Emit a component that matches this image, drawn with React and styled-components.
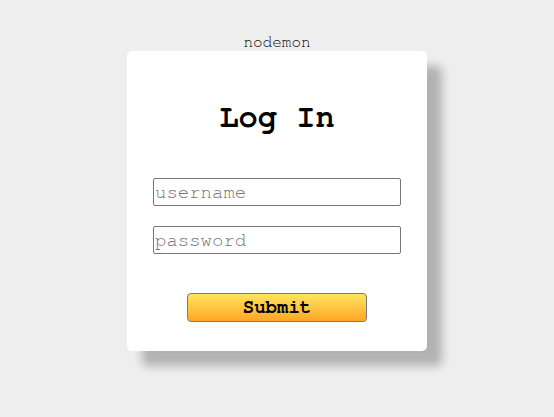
import React, { useState } from 'react';
import styled, { createGlobalStyle } from 'styled-components';

const mono = '"FreeMono", "TeX Gyre Cursor", "Liberation Mono", monospace';

const GlobalStyle = createGlobalStyle`
  html, body {
    margin: 0;
    padding: 0;
    background-color: #eeeeee;
    font-family: ${mono};
  }
`;

const Page = styled.div`
  display: flex;
  flex-direction: column;
  align-items: center;
  padding-top: 33px;
  min-height: 100vh;
  box-sizing: border-box;
`;

const AppName = styled.div`
  font-size: 16px;
  line-height: 18px;
  color: #111;
`;

const Card = styled.form`
  box-sizing: border-box;
  width: 300px;
  height: 300px;
  background: white;
  border-radius: 5px;
  box-shadow: 15px 15px 10px rgba(0, 0, 0, 0.25);
  display: flex;
  flex-direction: column;
  align-items: center;
  padding-top: 48px;
`;

const Title = styled.h1`
  margin: 0 0 43px;
  font-size: 32px;
  line-height: 36px;
  font-weight: bold;
  color: #000;
`;

const Input = styled.input`
  box-sizing: border-box;
  width: 248px;
  height: 28px;
  margin-bottom: ${({ last }) => (last ? '39px' : '20px')};
  padding: 0 1px;
  border: 1px solid #767676;
  border-radius: 2px;
  font-family: ${mono};
  font-size: 19px;
  color: #000;
  outline: none;

  &::placeholder {
    color: #757575;
  }
`;

const Button = styled.button`
  box-sizing: border-box;
  width: 180px;
  height: 29px;
  border: 1px solid #7a7a7a;
  border-radius: 4px;
  background: linear-gradient(to bottom, #ffe45c, #ffa726);
  font-family: ${mono};
  font-size: 19px;
  font-weight: bold;
  color: #000;
  cursor: pointer;
  padding: 0;
`;

const App = () => {
  const [username, setUsername] = useState('');
  const [password, setPassword] = useState('');

  return (
    <Page>
      <GlobalStyle />
      <AppName>nodemon</AppName>
      <Card onSubmit={(e) => e.preventDefault()}>
        <Title>Log In</Title>
        <Input
          type="text"
          placeholder="username"
          value={username}
          onChange={(e) => setUsername(e.target.value)}
        />
        <Input
          last
          type="password"
          placeholder="password"
          value={password}
          onChange={(e) => setPassword(e.target.value)}
        />
        <Button type="submit">Submit</Button>
      </Card>
    </Page>
  );
};

export default App;
